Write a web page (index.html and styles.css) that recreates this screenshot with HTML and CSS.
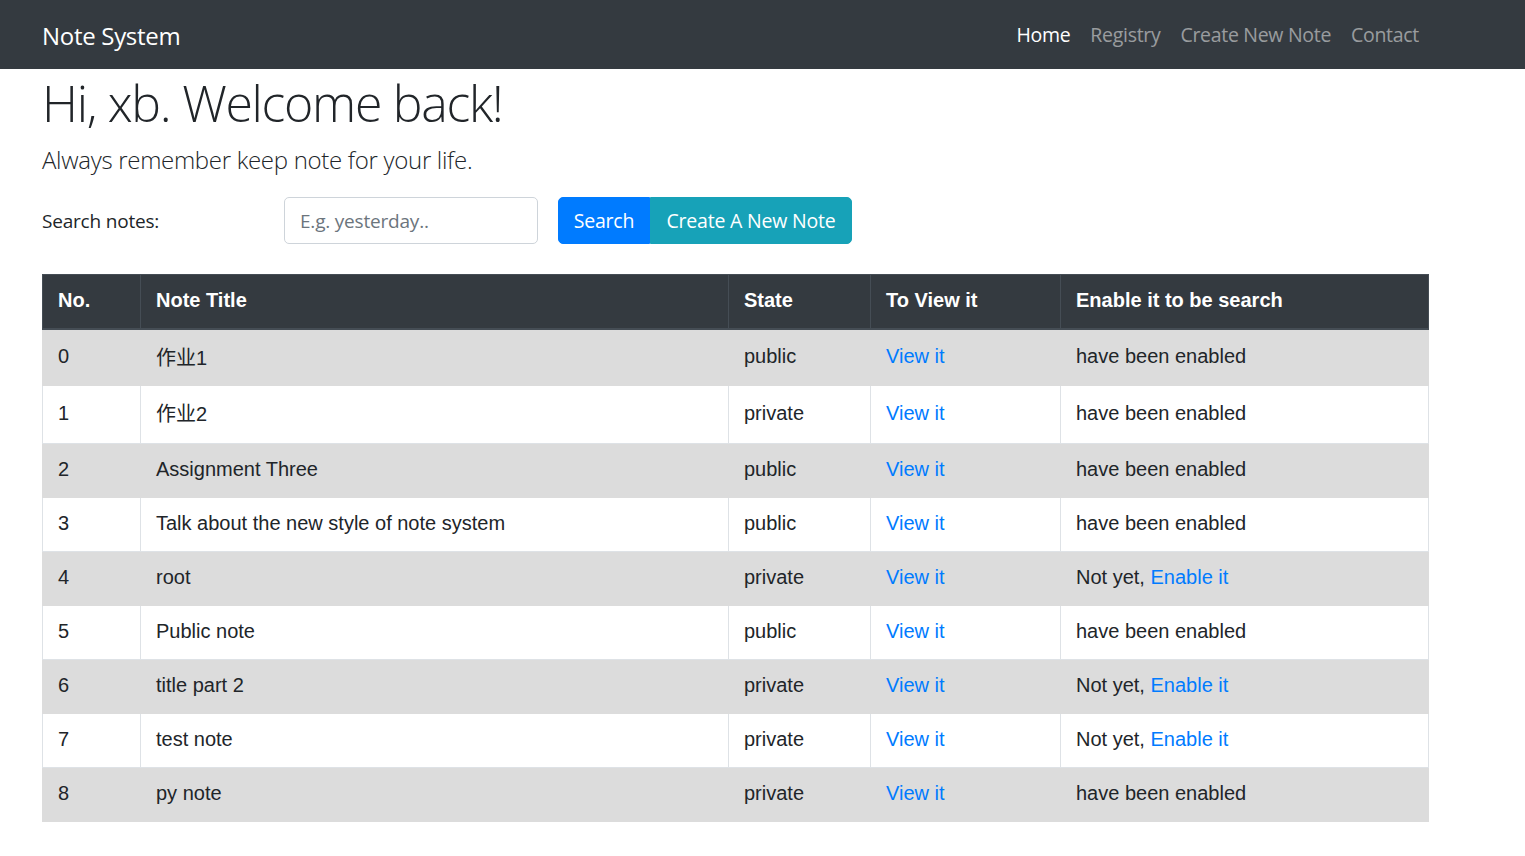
FILE: index.html
```html
<!DOCTYPE html>
<html lang="en">
<head>
<meta charset="utf-8">
<title>Note System</title>
<link rel="stylesheet" href="styles.css">
</head>
<body>
<nav class="navbar">
  <a class="brand" href="#">Note System</a>
  <ul class="nav-links">
    <li><a class="active" href="#">Home</a></li>
    <li><a href="#">Registry</a></li>
    <li><a href="#">Create New Note</a></li>
    <li><a href="#">Contact</a></li>
  </ul>
</nav>
<main class="page">
  <h1 class="title">Hi, xb. Welcome back!</h1>
  <p class="lead">Always remember keep note for your life.</p>
  <form class="search-row">
    <label class="search-label" for="q">Search notes:</label>
    <input class="search-input" id="q" type="text" placeholder="E.g. yesterday..">
    <div class="btn-group">
      <button type="button" class="btn btn-primary">Search</button>
      <button type="button" class="btn btn-info">Create A New Note</button>
    </div>
  </form>
  <table class="notes">
    <thead>
      <tr><th class="c-no">No.</th><th class="c-title">Note Title</th><th class="c-state">State</th><th class="c-view">To View it</th><th class="c-enable">Enable it to be search</th></tr>
    </thead>
    <tbody>
      <tr class="cjk-a"><td>0</td><td>作业1</td><td>public</td><td><a href="#">View it</a></td><td>have been enabled</td></tr>
      <tr class="cjk-b"><td>1</td><td>作业2</td><td>private</td><td><a href="#">View it</a></td><td>have been enabled</td></tr>
      <tr><td>2</td><td>Assignment Three</td><td>public</td><td><a href="#">View it</a></td><td>have been enabled</td></tr>
      <tr><td>3</td><td>Talk about the new style of note system</td><td>public</td><td><a href="#">View it</a></td><td>have been enabled</td></tr>
      <tr><td>4</td><td>root</td><td>private</td><td><a href="#">View it</a></td><td>Not yet, <a href="#">Enable it</a></td></tr>
      <tr><td>5</td><td>Public note</td><td>public</td><td><a href="#">View it</a></td><td>have been enabled</td></tr>
      <tr><td>6</td><td>title part 2</td><td>private</td><td><a href="#">View it</a></td><td>Not yet, <a href="#">Enable it</a></td></tr>
      <tr><td>7</td><td>test note</td><td>private</td><td><a href="#">View it</a></td><td>Not yet, <a href="#">Enable it</a></td></tr>
      <tr><td>8</td><td>py note</td><td>private</td><td><a href="#">View it</a></td><td>have been enabled</td></tr>
    </tbody>
  </table>
</main>
</body>
</html>
```
FILE: styles.css
```css
* { box-sizing: border-box; }
body {
  margin: 0;
  font-family: "Open Sans", "Noto Sans", sans-serif;
  color: #212529;
  background: #fff;
}
.navbar {
  height: 69px;
  background: #343a40;
  display: flex;
  align-items: center;
  padding: 0 96px 0 42px;
}
.brand {
  color: #fff;
  text-decoration: none;
  font-size: 24px;
  letter-spacing: -0.3px;
  margin-top: 2px;
}
.nav-links {
  list-style: none;
  margin: 0 0 0 auto;
  padding: 0;
  display: flex;
}
.nav-links a {
  display: block;
  padding: 0 10px;
  font-size: 19.5px;
  letter-spacing: -0.3px;
  color: rgba(255,255,255,0.5);
  text-decoration: none;
}
.nav-links a.active { color: #fff; }
.page {
  padding: 0 96px 0 42px;
}
.title {
  margin: 4px 0 0;
  font-weight: 300;
  font-size: 50px;
  line-height: 60px;
  letter-spacing: -1.3px;
}
.lead {
  margin: 10px 0 0;
  font-weight: 300;
  font-size: 24px;
  line-height: 34px;
  letter-spacing: -0.3px;
}
.search-row {
  display: flex;
  align-items: center;
  margin-top: 20px;
  height: 47px;
}
.search-label {
  width: 242px;
  font-size: 19px;
  letter-spacing: -0.2px;
}
.search-input {
  width: 254px;
  height: 47px;
  border: 1px solid #ced4da;
  border-radius: 5px;
  padding: 0 15px;
  font-family: inherit;
  font-size: 19px;
  letter-spacing: -0.2px;
  color: #495057;
}
.search-input::placeholder { color: #6c757d; }
.btn-group {
  display: flex;
  margin-left: 20px;
}
.btn {
  height: 47px;
  border: 1px solid transparent;
  color: #fff;
  font-family: inherit;
  font-size: 19.5px;
  letter-spacing: -0.2px;
  padding: 0 10px;
}
.btn-primary {
  background: #007bff;
  border-color: #007bff;
  border-radius: 5px 0 0 5px;
  width: 92px;
}
.btn-info {
  background: #17a2b8;
  border-color: #17a2b8;
  border-radius: 0 5px 5px 0;
  width: 202px;
}
.notes {
  margin-top: 30px;
  width: 1387px;
  border-collapse: collapse;
  font-family: "Liberation Sans", Arial, "Noto Sans CJK SC", sans-serif;
  font-size: 20px;
}
.notes th, .notes td {
  text-align: left;
  vertical-align: top;
  border: 1px solid #dee2e6;
  padding: 11px 15px 13px;
  line-height: 29px;
}
.notes th {
  background: #343a40;
  color: #fff;
  border-color: #454d55;
  border-bottom-width: 2px;
  font-weight: bold;
}
.notes .cjk-a td { padding-top: 12px; padding-bottom: 14px; }
.notes .cjk-b td { padding-top: 13px; padding-bottom: 15px; }
.notes .cjk-a td:nth-child(2),
.notes .cjk-b td:nth-child(2) { padding-top: 14px; padding-bottom: 12px; }
.notes .cjk-b td:nth-child(2) { padding-bottom: 14px; }
.c-no { width: 98px; }
.c-title { width: 588px; }
.c-state { width: 142px; }
.c-view { width: 190px; }
.notes tbody tr:nth-child(odd) td { background: #dcdcdc; border-color: #dcdcdc; }
.notes a { color: #007bff; text-decoration: none; }
```
